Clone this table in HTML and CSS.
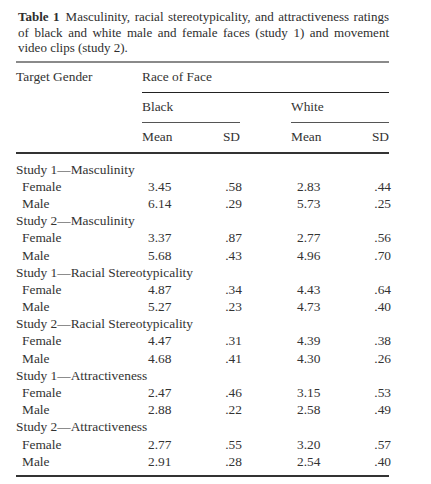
FILE: index.html
```html
<!DOCTYPE html>
<html>
<head>
<meta charset="utf-8">
<link rel="stylesheet" href="styles.css">
</head>
<body>
<div class="wrap">
  <p class="caption"><b class="tno">Table 1</b>Masculinity, racial stereotypicality, and attractiveness ratings of black and white male and female faces (study 1) and movement video clips (study 2).</p>
  <table class="tbl">
    <colgroup>
      <col class="col-lbl">
      <col class="col-mean">
      <col class="col-sd">
      <col class="col-gap">
      <col class="col-mean">
      <col class="col-sd">
    </colgroup>
    <thead>
      <tr class="h1">
        <th>Target Gender</th>
        <th class="race" colspan="5">Race of Face</th>
      </tr>
      <tr class="h2">
        <th></th>
        <th class="grp" colspan="2">Black</th>
        <th></th>
        <th class="grp" colspan="2">White</th>
      </tr>
      <tr class="h3">
        <th></th>
        <th>Mean</th>
        <th class="sd">SD</th>
        <th></th>
        <th>Mean</th>
        <th class="sd">SD</th>
      </tr>
    </thead>
    <tbody>
      <tr class="first"><td class="sec" colspan="6">Study 1—Masculinity</td></tr>
      <tr><td class="lbl">Female</td><td class="m">3.45</td><td class="s"><span>.58</span></td><td></td><td class="m">2.83</td><td class="s"><span>.44</span></td></tr>
      <tr><td class="lbl">Male</td><td class="m">6.14</td><td class="s"><span>.29</span></td><td></td><td class="m">5.73</td><td class="s"><span>.25</span></td></tr>
      <tr><td class="sec" colspan="6">Study 2—Masculinity</td></tr>
      <tr><td class="lbl">Female</td><td class="m">3.37</td><td class="s"><span>.87</span></td><td></td><td class="m">2.77</td><td class="s"><span>.56</span></td></tr>
      <tr><td class="lbl">Male</td><td class="m">5.68</td><td class="s"><span>.43</span></td><td></td><td class="m">4.96</td><td class="s"><span>.70</span></td></tr>
      <tr><td class="sec" colspan="6">Study 1—Racial Stereotypicality</td></tr>
      <tr><td class="lbl">Female</td><td class="m">4.87</td><td class="s"><span>.34</span></td><td></td><td class="m">4.43</td><td class="s"><span>.64</span></td></tr>
      <tr><td class="lbl">Male</td><td class="m">5.27</td><td class="s"><span>.23</span></td><td></td><td class="m">4.73</td><td class="s"><span>.40</span></td></tr>
      <tr><td class="sec" colspan="6">Study 2—Racial Stereotypicality</td></tr>
      <tr><td class="lbl">Female</td><td class="m">4.47</td><td class="s"><span>.31</span></td><td></td><td class="m">4.39</td><td class="s"><span>.38</span></td></tr>
      <tr><td class="lbl">Male</td><td class="m">4.68</td><td class="s"><span>.41</span></td><td></td><td class="m">4.30</td><td class="s"><span>.26</span></td></tr>
      <tr><td class="sec" colspan="6">Study 1—Attractiveness</td></tr>
      <tr><td class="lbl">Female</td><td class="m">2.47</td><td class="s"><span>.46</span></td><td></td><td class="m">3.15</td><td class="s"><span>.53</span></td></tr>
      <tr><td class="lbl">Male</td><td class="m">2.88</td><td class="s"><span>.22</span></td><td></td><td class="m">2.58</td><td class="s"><span>.49</span></td></tr>
      <tr><td class="sec" colspan="6">Study 2—Attractiveness</td></tr>
      <tr><td class="lbl">Female</td><td class="m">2.77</td><td class="s"><span>.55</span></td><td></td><td class="m">3.20</td><td class="s"><span>.57</span></td></tr>
      <tr class="last"><td class="lbl">Male</td><td class="m">2.91</td><td class="s"><span>.28</span></td><td></td><td class="m">2.54</td><td class="s"><span>.40</span></td></tr>
    </tbody>
  </table>
</div>
</body>
</html>
```
FILE: styles.css
```css
html, body {
  margin: 0;
  padding: 0;
  background: #ffffff;
}
body {
  font-family: "Liberation Serif", "Times New Roman", serif;
  font-size: 13.4px;
  color: #333333;
}
.wrap {
  width: 373px;
  margin-left: 16px;
  padding-top: 9px;
}
.caption {
  margin: 0 0 0 2px;
  font-size: 13px;
  line-height: 15.5px;
  text-align: justify;
  color: #2e2e2e;
}
.tno {
  font-weight: bold;
  margin-right: 6px;
}
.tbl {
  width: 373px;
  margin-top: 5px;
  border-collapse: collapse;
  table-layout: fixed;
}
.col-lbl { width: 126px; }
.col-mean { width: 58px; }
.col-sd { width: 40px; }
.col-gap { width: 51px; }
.tbl th, .tbl td {
  padding: 0;
  font-weight: normal;
  text-align: left;
  white-space: nowrap;
}
.h1 {
  border-top: 2px solid #8a8a8a;
}
.h1 th {
  height: 29px;
}
.race {
  border-bottom: 1px solid #222;
}
.h2 th {
  height: 29px;
}
.h2 .grp {
  border-bottom: 1px solid #555;
}
.h3 {
  border-bottom: 2px solid #333;
}
.h3 th {
  height: 29px;
}
.h3 .sd {
  text-align: right;
}
.tbl td {
  height: 17.2px;
  line-height: 17px;
}
.tbl tr.first td {
  padding-top: 7px;
}
.tbl tr.last {
  border-bottom: 2px solid #333;
}
.tbl tr.last td {
  padding-bottom: 5px;
}
.lbl {
  padding-left: 6px !important;
}
.m {
  padding-left: 6px !important;
}
.s {
  text-align: right !important;
}
.s span {
  position: relative;
  left: 2px;
}
```
